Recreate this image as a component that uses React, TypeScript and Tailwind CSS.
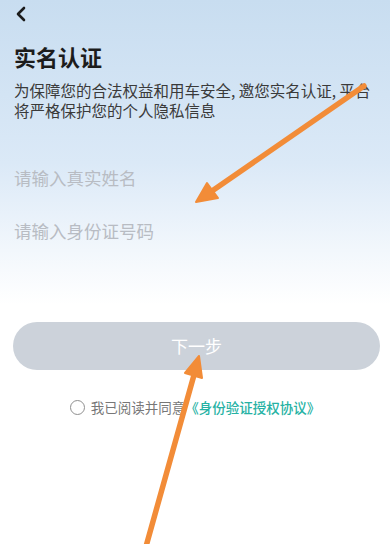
import { ChevronLeft } from 'lucide-react';

const font = { fontFamily: '"Noto Sans CJK SC", "Noto Sans", sans-serif' };

function Arrows() {
  return (
    <svg className="pointer-events-none absolute inset-0" width={390} height={544} viewBox="0 0 390 544">
      <g stroke="#f28c38" strokeWidth={5.5} strokeLinecap="round" fill="#f28c38">
        <line x1={364} y1={86} x2={212} y2={191} />
        <polygon points="196,202 207,183 218,198" strokeWidth={2} strokeLinejoin="round" />
        <line x1={145} y1={550} x2={194} y2={375} />
        <polygon points="199,356 185,373 202,378" strokeWidth={2} strokeLinejoin="round" />
      </g>
    </svg>
  );
}

export default function App() {
  return (
    <div
      className="relative h-[544px] w-[390px] overflow-hidden bg-[linear-gradient(180deg,#c8ddf0_0%,#dbe9f7_30%,#f2f7fc_46%,#ffffff_56%)]"
      style={font}
    >
      <div className="flex h-[30px] items-start pl-[9px] pt-[2px]">
        <ChevronLeft size={24} strokeWidth={2.6} className="text-[#1b1b1b]" />
      </div>

      <div className="px-[14px]">
        <h1 className="mt-[11px] text-[22px] font-bold leading-[31px] text-[#1c1c1c]">实名认证</h1>
        <p className="mt-[8px] text-[15.5px] leading-[20px] text-[#3a3a3a]">
          为保障您的合法权益和用车安全, 邀您实名认证, 平台将严格保护您的个人隐私信息
        </p>

        <div className="mt-[32px] flex flex-col">
          <div className="flex h-[53px] items-center">
            <input
              className="w-full bg-transparent text-[17.5px] text-[#333] outline-none placeholder:text-[#b8bcc3]"
              placeholder="请输入真实姓名"
            />
          </div>
          <div className="flex h-[53px] items-center">
            <input
              className="w-full bg-transparent text-[17.5px] text-[#333] outline-none placeholder:text-[#b8bcc3]"
              placeholder="请输入身份证号码"
            />
          </div>
        </div>
      </div>

      <div className="mt-[64px] pl-[13px] pr-[10px]">
        <button className="flex h-[48px] w-full items-center justify-center rounded-full bg-[#ccd2da] text-[17px] text-white">
          下一步
        </button>
      </div>

      <div className="mt-[27px] flex h-[20px] items-center justify-center gap-[6px] text-[13.5px]">
        <span className="h-[15px] w-[15px] rounded-full border border-[#8f8f8f]" />
        <span className="text-[#777]">
          我已阅读并同意
          <span className="font-medium text-[#26b2a4]">《身份验证授权协议》</span>
        </span>
      </div>

      <Arrows />
    </div>
  );
}
